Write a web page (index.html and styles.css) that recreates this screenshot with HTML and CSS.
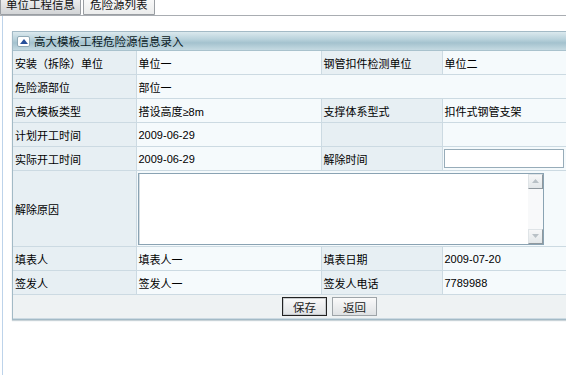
FILE: index.html
```html
<!DOCTYPE html>
<html lang="zh-CN">
<head>
    <meta charset="UTF-8">
    <title>高大模板工程危险源信息录入</title>
    <link rel="stylesheet" href="styles.css">
</head>
<body>

<div class="tabs">
    <span class="tab">单位工程信息</span>
    <span class="tab active">危险源列表</span>
</div>

<div class="main">
    <div class="panel">
        <div class="panel-head">
            <span class="toggle">
                <svg width="8" height="5" viewBox="0 0 8 5"><path d="M0 5 L4 0 L8 5 Z" fill="#27509a"/></svg>
            </span>
            高大模板工程危险源信息录入
        </div>
        <table class="form">
            <colgroup>
                <col class="c1">
                <col class="c2">
                <col class="c3">
                <col>
            </colgroup>
            <tr>
                <td class="label">安装（拆除）单位</td>
                <td class="value">单位一</td>
                <td class="label">钢管扣件检测单位</td>
                <td class="value">单位二</td>
            </tr>
            <tr>
                <td class="label">危险源部位</td>
                <td class="value" colspan="3">部位一</td>
            </tr>
            <tr>
                <td class="label">高大模板类型</td>
                <td class="value">搭设高度≥8m</td>
                <td class="label">支撑体系型式</td>
                <td class="value">扣件式钢管支架</td>
            </tr>
            <tr>
                <td class="label">计划开工时间</td>
                <td class="value">2009-06-29</td>
                <td class="label"></td>
                <td class="value"></td>
            </tr>
            <tr>
                <td class="label">实际开工时间</td>
                <td class="value">2009-06-29</td>
                <td class="label">解除时间</td>
                <td class="value field"><input type="text" class="text-input"></td>
            </tr>
            <tr class="tall">
                <td class="label">解除原因</td>
                <td class="value field" colspan="3">
                    <div class="reason-box">
                        <textarea class="reason"></textarea>
                        <div class="vscroll">
                            <span class="sb-btn">
                                <svg width="7" height="4" viewBox="0 0 7 4"><path d="M0 4 L3.5 0 L7 4 Z" fill="#b9c1c6"/></svg>
                            </span>
                            <span class="sb-btn">
                                <svg width="7" height="4" viewBox="0 0 7 4"><path d="M0 0 L3.5 4 L7 0 Z" fill="#b9c1c6"/></svg>
                            </span>
                        </div>
                    </div>
                </td>
            </tr>
            <tr>
                <td class="label">填表人</td>
                <td class="value">填表人一</td>
                <td class="label">填表日期</td>
                <td class="value">2009-07-20</td>
            </tr>
            <tr>
                <td class="label">签发人</td>
                <td class="value">签发人一</td>
                <td class="label">签发人电话</td>
                <td class="value">7789988</td>
            </tr>
            <tr>
                <td class="actions" colspan="4">
                    <button class="btn default">保存</button>
                    <button class="btn">返回</button>
                </td>
            </tr>
        </table>
    </div>
</div>

</body>
</html>
```

FILE: styles.css
```css
html, body {
    margin: 0;
    height: 100%;
    overflow: hidden;
    background: #fff;
}
body {
    font-family: "Liberation Sans", "Noto Sans CJK SC", sans-serif;
    font-size: 11px;
    color: #000;
}
.tabs {
    display: flex;
    align-items: flex-end;
    gap: 2px;
    height: 15px;
    overflow: hidden;
    border-bottom: 1px solid #a9adb2;
}
.tab {
    height: 19px;
    box-sizing: border-box;
    padding: 2px 5px 0;
    line-height: 12px;
    font-size: 11.5px;
    border: 1px solid #9a9ea3;
    border-radius: 3px 3px 0 0;
    background: linear-gradient(#f3f3f3, #d2d4d6);
    color: #111;
}
.tab.active {
    padding: 2px 6px 0;
    background: linear-gradient(#fbfbfb, #ebecec);
}
.main {
    box-sizing: border-box;
    height: calc(100% - 16px);
    margin-left: 2px;
    border-left: 1px solid #bdd3ea;
    padding: 15px 0 0 9px;
    overflow: hidden;
}
.panel {
    width: 634px;
    border: 1px solid #a3bac6;
    background: #f5f9fa;
    box-shadow: 0 1px 1px #c9d3d8;
}
.panel-head {
    height: 18px;
    display: flex;
    align-items: center;
    gap: 4px;
    padding-left: 4px;
    border-bottom: 1px solid #a9c2cd;
    background: linear-gradient(#dbe9ee, #b9d2dc 40%, #a4c2ce 60%, #c5dae2);
    font-size: 11.5px;
    color: #0b1a24;
}
.toggle {
    width: 11px;
    height: 9px;
    display: flex;
    align-items: center;
    justify-content: center;
    background: #fff;
    border: 1px solid #8fa9b6;
    border-radius: 2px;
}
.form {
    width: 100%;
    border-collapse: collapse;
    table-layout: fixed;
}
.form .c1 {
    width: 123px;
}
.form .c2 {
    width: 185px;
}
.form .c3 {
    width: 121px;
}
.form td {
    height: 23px;
    padding: 0 2px;
    border: 1px solid #ccdae2;
    white-space: nowrap;
    overflow: hidden;
}
.form tr:first-child td {
    border-top: none;
}
.form td:first-child {
    border-left: none;
}
.form .label {
    background: #e7eff3;
}
.form .value {
    background: #f5fafc;
}
.form .field {
    padding: 0 1px;
}
.form .tall td {
    height: 75px;
}
.text-input {
    display: block;
    width: 120px;
    height: 19px;
    box-sizing: border-box;
    border: 1px solid #97acb9;
    background: #fff;
    margin: 0;
}
.reason-box {
    display: flex;
    width: 406px;
    height: 72px;
    box-sizing: border-box;
    border: 1px solid #8aa3b3;
    background: #fff;
}
.reason {
    flex: 1;
    margin: 0;
    padding: 2px;
    border: none;
    border-left: 1px solid #d6dde1;
    background: #fff;
    resize: none;
    outline: none;
}
.vscroll {
    width: 15px;
    display: flex;
    flex-direction: column;
    justify-content: space-between;
    background: #f8f9fa;
}
.sb-btn {
    height: 15px;
    box-sizing: border-box;
    display: flex;
    align-items: center;
    justify-content: center;
    background: linear-gradient(#f6f7f8, #e3e7e9);
    border: 1px solid #dfe4e7;
    border-right-color: #8f989e;
    border-bottom-color: #8f989e;
}
.actions {
    height: 24px;
    text-align: center;
    background: #eef2f3;
}
.btn {
    width: 45px;
    height: 19px;
    margin: 0 1px;
    padding: 0;
    font-family: inherit;
    font-size: 11.5px;
    color: #222;
    border: 1px solid #9ea4a8;
    border-radius: 0;
    background: linear-gradient(#fafafa, #dfe2e4);
}
.btn.default {
    border: 1px solid #222;
    box-shadow: inset 0 0 0 1px #c7cbce;
}
```
